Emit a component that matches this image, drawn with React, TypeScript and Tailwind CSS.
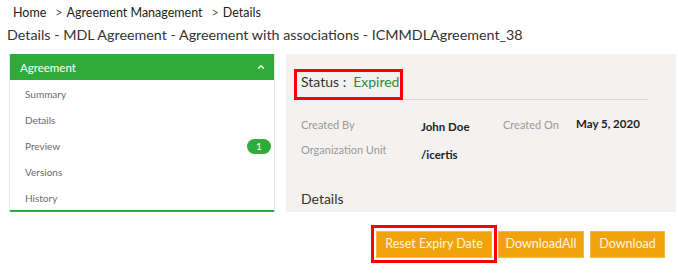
import { ChevronUp } from "lucide-react";

const navItems = ["Summary", "Details", "Preview", "Versions", "History"];

function NavPanel() {
  return (
    <div className="w-[266px] border-x border-[#e3e3e3]">
      <div className="flex h-[26px] items-center justify-between bg-[#2eab3b] pl-[10px] pr-[8px] text-[11.5px] text-white">
        <span>Agreement</span>
        <ChevronUp className="h-[10px] w-[10px]" strokeWidth={3} />
      </div>
      <ul className="border-b-2 border-[#2eab3b]">
        {navItems.map((item) => (
          <li
            key={item}
            className="flex h-[26px] items-center justify-between pl-[15px] pr-[3px] pt-[3px] text-[10px] text-[#6b6b6b]"
          >
            <span>{item}</span>
            {item === "Preview" && (
              <span className="flex h-[15px] w-[24px] items-center justify-center rounded-full bg-[#2eab3b] text-[10px] text-white">
                1
              </span>
            )}
          </li>
        ))}
      </ul>
    </div>
  );
}

function Field({ label, value, className }: { label: string; value: string; className?: string }) {
  return (
    <>
      <span className="text-[11px] text-[#9a9a9a]">{label}</span>
      <span className={`text-[11.5px] font-bold text-[#222] ${className ?? ""}`}>{value}</span>
    </>
  );
}

function DetailPanel() {
  return (
    <div className="relative h-[158px] w-[390px] bg-[#f3f2f1]">
      <div className="ml-[8px] flex h-[46px] w-[355px] items-end border-b border-[#dadada] pb-[7px] pl-[7px] text-[14px]">
        <span className="text-[#333]">Status :</span>
        <span className="ml-[7px] text-[#2e8b3e]">Expired</span>
      </div>
      <div className="absolute left-[8px] top-[15px] h-[31px] w-[109px] border-[3px] border-[#ff0000]" />

      <div className="mt-[17px] grid grid-cols-[120px_82px_73px_auto] gap-y-[8px] pl-[15px]">
        <Field label="Created By" value="John Doe" className="translate-y-[1px]" />
        <Field label="Created On" value="May 5, 2020" className="-translate-y-[2px]" />
        <Field label="Organization Unit" value="/icertis" className="translate-y-[4px]" />
      </div>

      <div className="mt-[28px] pl-[15px] text-[14px] text-[#333]">Details</div>
    </div>
  );
}

function ActionButton({ children, width }: { children: string; width: string }) {
  return (
    <button
      className={`h-[27px] border border-[#f5b94a] bg-[#f0a30a] text-center text-[12.5px] text-[#fff6e0] ${width}`}
    >
      {children}
    </button>
  );
}

export default function App() {
  return (
    <div className="h-[274px] w-[678px] overflow-hidden bg-white font-['Lato',sans-serif]">
      <div className="flex pl-[13px] pt-[4px] text-[12.5px] text-[#222]">
        <span>Home</span>
        <span className="ml-[9px] mr-[4px] text-[#555]">&gt;</span>
        <span>Agreement Management</span>
        <span className="ml-[9px] mr-[4px] text-[#555]">&gt;</span>
        <span>Details</span>
      </div>
      <div className="mt-[1px] pl-[7px] text-[14.3px] text-[#333]">
        Details - MDL Agreement - Agreement with associations - ICMMDLAgreement_38
      </div>

      <div className="mt-[9px] flex">
        <div className="ml-[9px]">
          <NavPanel />
        </div>
        <div className="ml-[11px]">
          <DetailPanel />
        </div>
      </div>

      <div className="mt-[13px] flex items-center justify-end pr-[13px]">
        <div className="border-[3px] border-[#ff0000] p-[2px]">
          <ActionButton width="w-[116px]">Reset Expiry Date</ActionButton>
        </div>
        <div className="ml-[1px]">
          <ActionButton width="w-[86px]">DownloadAll</ActionButton>
        </div>
        <div className="ml-[6px]">
          <ActionButton width="w-[75px]">Download</ActionButton>
        </div>
      </div>
    </div>
  );
}
